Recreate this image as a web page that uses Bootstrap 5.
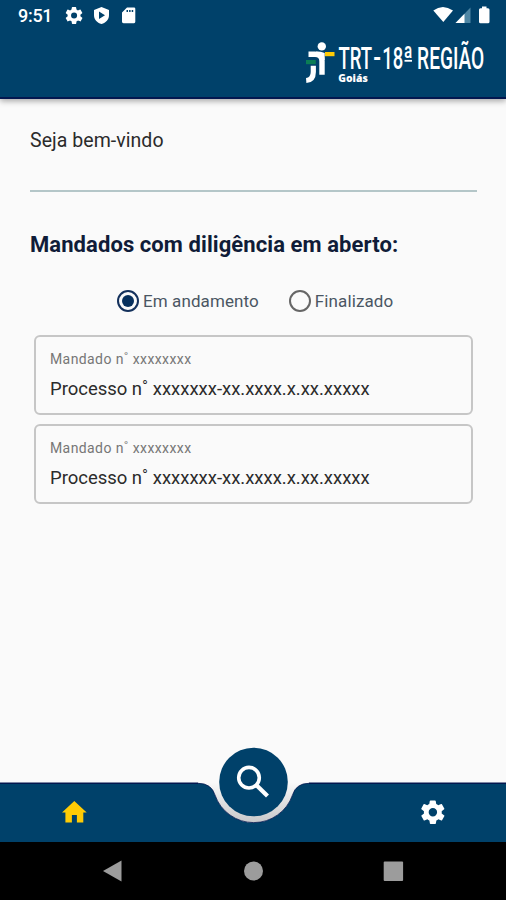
<!DOCTYPE html>
<html lang="pt-BR">
<head>
<meta charset="utf-8">
<meta name="viewport" content="width=device-width, initial-scale=1">
<title>TRT-18ª Região</title>
<link href="https://cdn.jsdelivr.net/npm/bootstrap@5.3.0/dist/css/bootstrap.min.css" rel="stylesheet">
<style>
  body { font-family: Roboto, "Noto Sans", sans-serif; background: #fafafa; color: #2b2b2b; height: 900px; overflow: hidden; }
  svg { display: block; }
  .app-head { height: 99px; background: #00416a; border-bottom: 2px solid #03174f; box-shadow: 0 2px 6px rgba(0,0,0,.35); padding: 0 15px 0 18px; }
  .status { height: 32px; color: #fff; }
  .clock { font-size: 18px; font-weight: 500; letter-spacing: -.3px; width: 46px; line-height: 32px; }
  .brand { margin: 1px 0 0 0; }
  .content { padding: 30px 29px 0 30px; }
  .welcome { font-size: 19.5px; line-height: 24px; letter-spacing: .05px; }
  .rule { height: 2px; background: #b4c6c8; margin-top: 37px; }
  .heading { font-size: 22px; line-height: 28px; font-weight: 700; letter-spacing: .08px; color: #101c38; margin: 39px 0 0; }
  .choices { margin: 30px 0 0 87px; gap: 30px; height: 24px; }
  .choice { font-size: 17px; line-height: 24px; color: #4a5663; gap: 4px; letter-spacing: .1px; }
  .dot { width: 22px; height: 22px; border: 2px solid #666; }
  .dot.on { border-color: #14315c; }
  .dot.on::after { content: ""; width: 12px; height: 12px; border-radius: 50%; background: #07305d; }
  .orders { margin: 22px 4px 0 4px; gap: 9px; }
  .order { height: 80px; border: 2px solid #c6c6c6; border-radius: 6px; background: #fafafa; padding: 11px 14px; }
  .order small { font-size: 14px; line-height: 22px; color: #767676; letter-spacing: .4px; }
  .order span { font-size: 18.5px; line-height: 24px; margin-top: 7px; letter-spacing: -.02px; }
  .tabs { height: 95px; }
  .sys { height: 58px; background: #000; }
</style>
</head>
<body class="d-flex flex-column">
<header class="app-head flex-shrink-0">
  <div class="status d-flex align-items-center">
    <div class="clock">9:51</div>
    <svg width="75" height="32" viewBox="64 0 75 32" fill="#fff">
      <path transform="translate(63.4 4.8) scale(.89)" d="M19.1 12.9a7 7 0 0 0 0-1.8l2-1.6a.5.5 0 0 0 .1-.6l-1.9-3.3a.5.5 0 0 0-.6-.2l-2.4 1a7 7 0 0 0-1.6-1l-.4-2.5a.5.5 0 0 0-.5-.4H10a.5.5 0 0 0-.5.4l-.4 2.5a7 7 0 0 0-1.6 1l-2.4-1a.5.5 0 0 0-.6.2L2.7 8.9a.5.5 0 0 0 .1.6l2 1.6a7 7 0 0 0 0 1.8l-2 1.6a.5.5 0 0 0-.1.6l1.9 3.3a.5.5 0 0 0 .6.2l2.4-1a7 7 0 0 0 1.6 1l.4 2.5a.5.5 0 0 0 .5.4h3.8a.5.5 0 0 0 .5-.4l.4-2.5a7 7 0 0 0 1.6-1l2.4 1a.5.5 0 0 0 .6-.2l1.9-3.3a.5.5 0 0 0-.1-.6zM12 15.4a3.4 3.4 0 1 1 0-6.8 3.4 3.4 0 0 1 0 6.8z"/>
      <path fill-rule="evenodd" d="M101.500 7l7.500 3v5c0 4.500-3 7.800-7.500 9-4.500-1.200-7.500-4.500-7.500-9v-5zM99 11.500v7.500l6-3.700z"/>
      <path fill-rule="evenodd" d="M127 7.500h7q1.300 0 1.300 1.300v13q0 1.400-1.300 1.400h-10.500q-1.500 0-1.500-1.400V12.500zM126.500 10v2h1.500v-2zm2.600 0v2h1.500v-2zm2.600 0v2h1.500v-2z"/>
    </svg>
    <svg class="ms-auto" width="60" height="32" viewBox="431 0 60 32">
      <path fill="#fff" d="M433.300 10.500Q442.700 3.500 453 10.500L443.300 22z"/>
      <path fill="#4e86a4" d="M470.500 7.500V23H455.500z"/>
      <path fill="#fff" d="M464.500 13.700V23H455.500z"/>
      <path fill="#fff" d="M482 6.500h4.500v1.800h1.500q1.500 0 1.500 1.500v12q0 1.500-1.500 1.500h-7.500q-1.500 0-1.500-1.500v-12q0-1.500 1.500-1.500h1.500z"/>
    </svg>
  </div>
  <div class="brand d-flex justify-content-end">
    <svg width="187" height="56" viewBox="304 33 187 56">
      <circle cx="321.800" cy="46.400" r="4.200" fill="#fff"/>
      <path d="M308.500 54.300H315Q322 54.300 322 61V74.700" fill="none" stroke="#fff" stroke-width="5.400"/>
      <path d="M316 51.600q5 0 8.700 1.400v7h-4z" fill="#fff"/>
      <path d="M325 52h9.500v4.200H325z" fill="#ffcb05"/>
      <path d="M306 60h9.800v4.200H306z" fill="#0b7d55"/>
      <path d="M313.300 65.800V72Q313.300 80 306.200 80.500" fill="none" stroke="#fff" stroke-width="5.200"/>
      <g fill="#fff" font-family="Roboto, sans-serif">
        <text y="68.700" font-size="32" font-weight="500" transform="translate(338.500 0) scale(.6 1)" x="0"><tspan textLength="56" lengthAdjust="spacingAndGlyphs">TRT</tspan><tspan x="58" dy="-1" textLength="13" lengthAdjust="spacingAndGlyphs">-</tspan><tspan x="73" dy="1" textLength="35" lengthAdjust="spacingAndGlyphs">18</tspan><tspan x="108" textLength="16" lengthAdjust="spacingAndGlyphs">ª</tspan><tspan x="131" textLength="112" lengthAdjust="spacingAndGlyphs">REGIÃO</tspan></text>
        <path d="M404.500 60.800h7.500" stroke="#fff" stroke-width="1.800"/>
        <text x="338.300" y="81.800" font-family="Open Sans" font-weight="800" font-size="11" textLength="29.500" lengthAdjust="spacingAndGlyphs">Goiás</text>
      </g>
    </svg>
  </div>
</header>

<main class="content flex-grow-1">
  <div class="welcome">Seja bem-vindo</div>
  <div class="rule"></div>
  <h1 class="heading">Mandados com diligência em aberto:</h1>
  <div class="choices d-flex">
    <div class="choice d-flex align-items-center"><i class="dot on rounded-circle d-flex align-items-center justify-content-center"></i>Em andamento</div>
    <div class="choice d-flex align-items-center"><i class="dot rounded-circle"></i>Finalizado</div>
  </div>
  <div class="orders d-flex flex-column">
    <div class="order d-flex flex-column"><small>Mandado n˚ xxxxxxxx</small><span>Processo n˚ xxxxxxx-xx.xxxx.x.xx.xxxxx</span></div>
    <div class="order d-flex flex-column"><small>Mandado n˚ xxxxxxxx</small><span>Processo n˚ xxxxxxx-xx.xxxx.x.xx.xxxxx</span></div>
  </div>
</main>

<nav class="tabs flex-shrink-0">
  <svg width="506" height="95" viewBox="0 747 506 95">
    <defs>
      <linearGradient id="shade" x1="0" y1="0" x2="0" y2="1">
        <stop offset="0" stop-color="#fafafa"/><stop offset=".5" stop-color="#e0e0e0"/><stop offset="1" stop-color="#c9c9cb"/>
      </linearGradient>
    </defs>
    <path d="M0 783.300H198Q211.500 783.300 215 795A41 41 0 0 0 292.500 795Q296 783.300 309 783.300H506V842H0z" fill="#00416a"/>
    <path d="M198 782.500Q211.500 783 215 795A41 41 0 0 0 292.500 795Q296 783 309 782.500z" fill="url(#shade)"/>
    <path d="M0 783.300H198M309 783.300H506" fill="none" stroke="#03174f" stroke-width="1.600"/>
    <path d="M198 783.300Q211.500 783.300 215 795A41 41 0 0 0 292.500 795Q296 783.300 309 783.300" fill="none" stroke="#03174f" stroke-width=".8"/>
    <circle cx="253.500" cy="782" r="34.300" fill="#00416a"/>
    <circle cx="249" cy="777.700" r="10.300" fill="none" stroke="#fff" stroke-width="3.600"/>
    <path d="M256.500 785.200L267.500 796" stroke="#fff" stroke-width="4.200"/>
    <path d="M74.300 801L62 812.500h3.400v10h6.500v-7.500h5v7.500h6.400v-10h3.400z" fill="#ffcb05"/>
    <path fill="#fff" transform="translate(418 797.400) scale(1.240)" d="M19.100 12.900a7 7 0 0 0 0-1.800l2-1.600a.5.5 0 0 0 .1-.6l-1.900-3.300a.5.5 0 0 0-.6-.2l-2.400 1a7 7 0 0 0-1.600-1l-.4-2.500a.5.5 0 0 0-.5-.4H10a.5.5 0 0 0-.5.4l-.4 2.500a7 7 0 0 0-1.600 1l-2.400-1a.5.5 0 0 0-.6.2L2.700 8.900a.5.5 0 0 0 .1.6l2 1.600a7 7 0 0 0 0 1.800l-2 1.600a.5.5 0 0 0-.1.6l1.900 3.300a.5.5 0 0 0 .6.2l2.400-1a7 7 0 0 0 1.600 1l.4 2.500a.5.5 0 0 0 .5.4h3.800a.5.5 0 0 0 .5-.4l.4-2.500a7 7 0 0 0 1.600-1l2.400 1a.5.5 0 0 0 .6-.2l1.900-3.300a.5.5 0 0 0-.1-.6zM12 15.400a3.400 3.400 0 1 1 0-6.800 3.400 3.400 0 0 1 0 6.800z"/>
  </svg>
</nav>
<footer class="sys flex-shrink-0">
  <svg width="506" height="58" viewBox="0 842 506 58" fill="#9c9c9c">
    <path d="M103 871L121.500 860.500V881.500z"/>
    <circle cx="253.500" cy="871" r="9.500"/>
    <rect x="383.700" y="861.500" width="19.400" height="19.400" rx="1"/>
  </svg>
</footer>
<script src="https://cdn.jsdelivr.net/npm/bootstrap@5.3.0/dist/js/bootstrap.bundle.min.js"></script>
</body>
</html>
